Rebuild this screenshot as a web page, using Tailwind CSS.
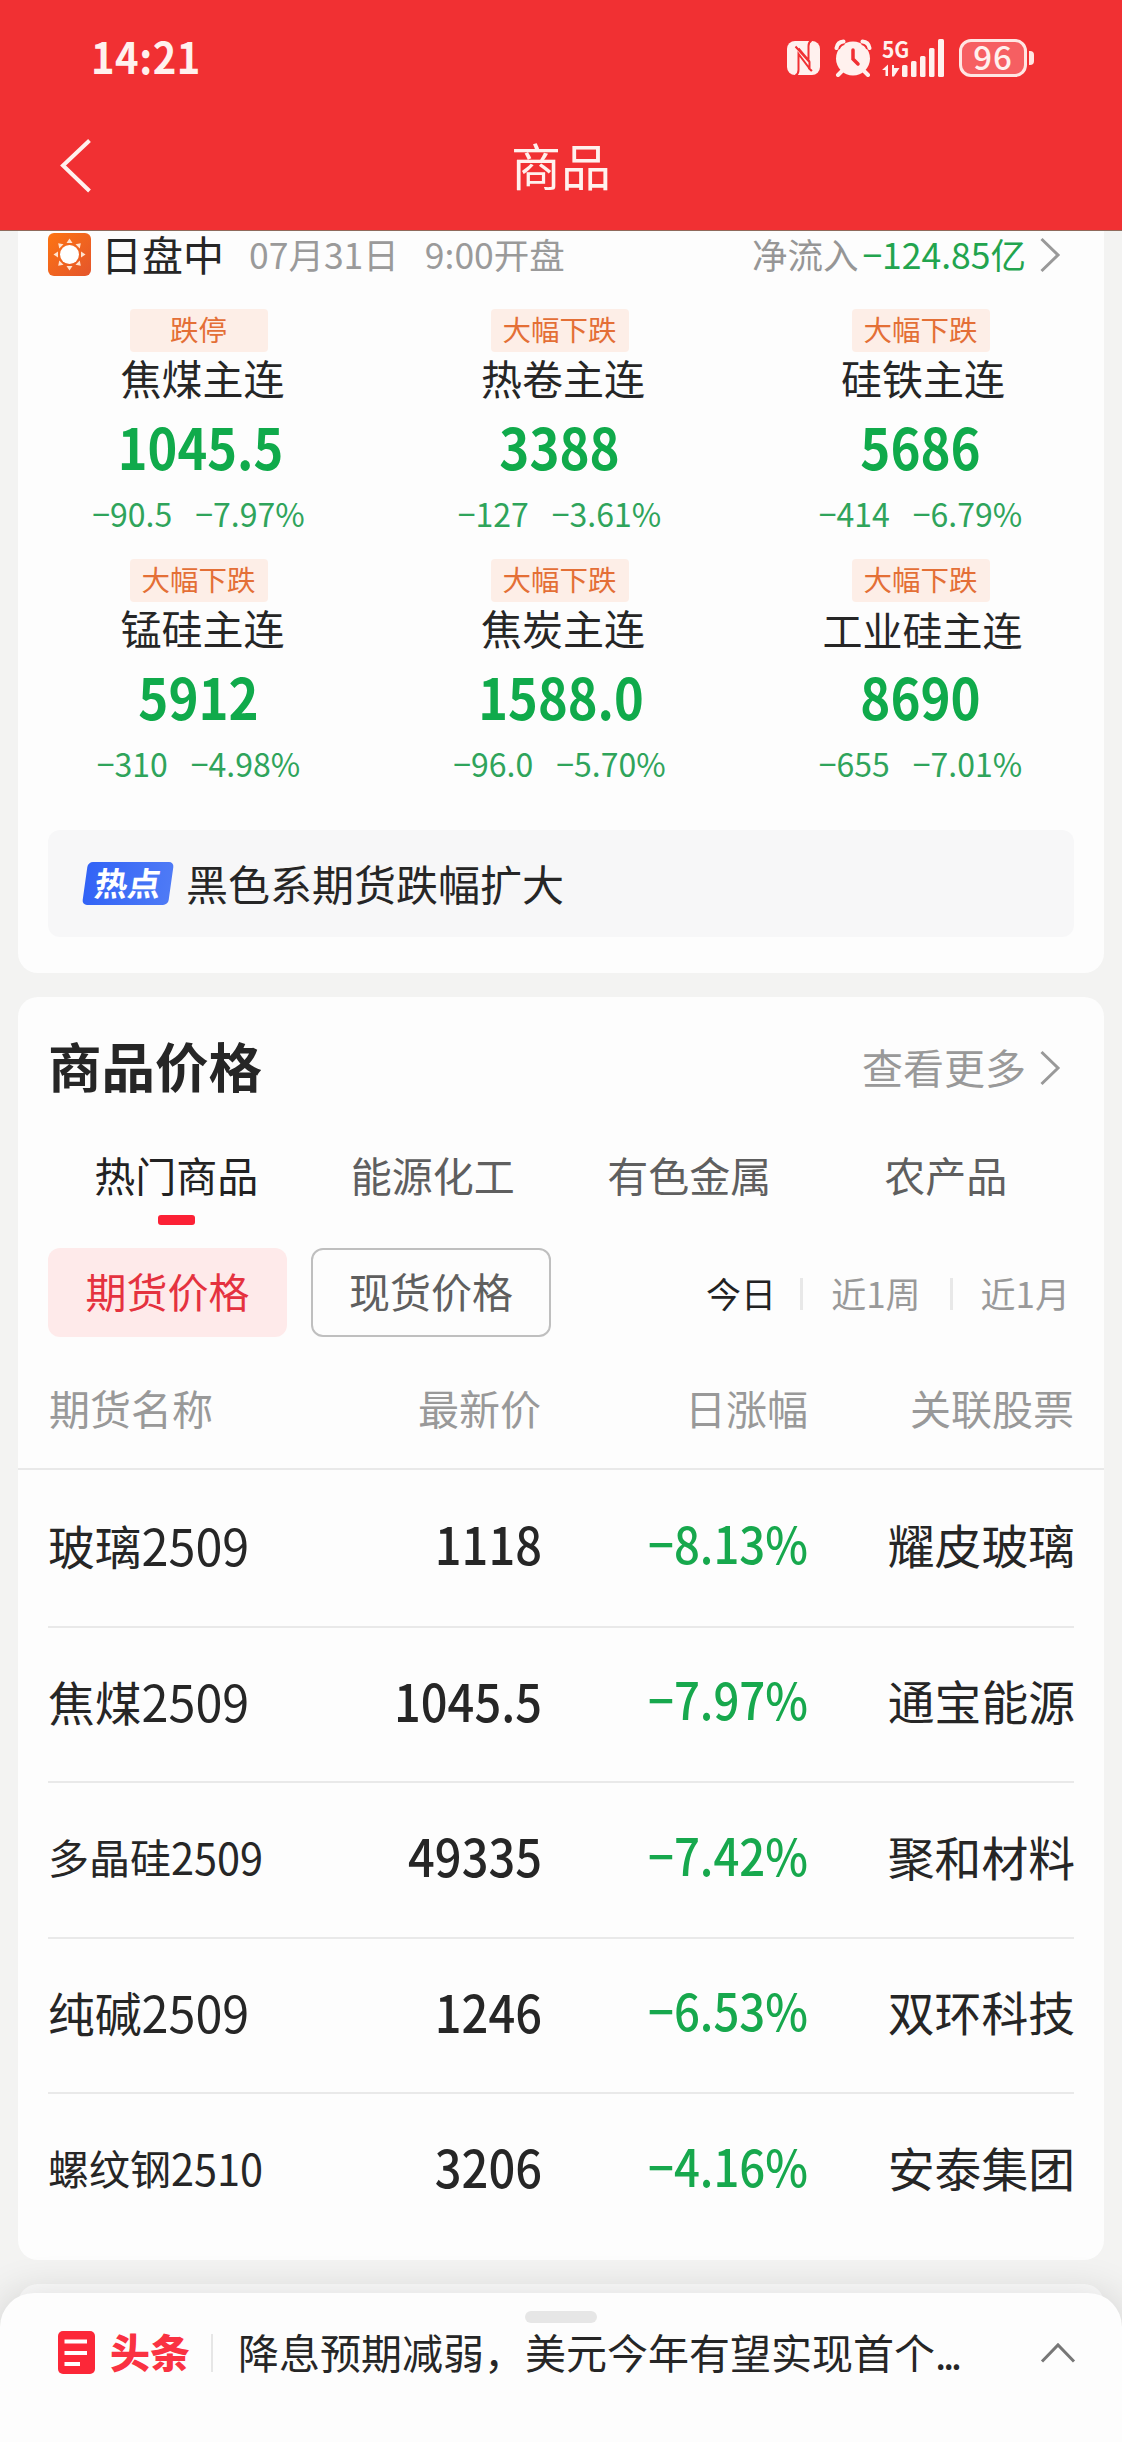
<!DOCTYPE html>
<html lang="zh-CN">
<head>
<meta charset="utf-8">
<meta name="viewport" content="width=device-width, initial-scale=1">
<title>商品</title>
<script src="https://cdn.jsdelivr.net/npm/@tailwindcss/browser@4"></script>
</head>
<body class="bg-[#f3f3f2]">
<div class="relative h-[2442px] w-[1122px] overflow-hidden bg-[#f3f3f2] font-['Noto_Sans_CJK_SC',sans-serif] leading-none whitespace-nowrap text-[#262626]">

  <!-- Header -->
  <header class="h-[231px] border-b border-[#8f6a5c] bg-[#f13033] text-[#fff1ee]">
    <div class="flex h-[116px] items-center pr-[88px] pl-[91px]">
      <div class="mb-[4px] scale-y-108 text-[40px] font-bold tracking-[0.500px]">14:21</div>
      <div class="ml-auto flex items-center">
        <!-- NFC -->
        <svg class="h-[36px] w-[36px]" viewBox="0 0 36 36">
          <rect x="1" y="1" width="33" height="34" rx="8" fill="#fff1ee"/>
          <path d="M9.500 35.500Q12.500 34 12.500 30V14L23.500 28.500V22L9.500 6.500M25.500 0.500Q22.500 2 22.500 6V19.500M12.500 8.500L23.500 21.500M22.500 28L26 31" fill="none" stroke="#f13033" stroke-width="2"/>
        </svg>
        <!-- Alarm -->
        <svg class="ml-[12px] h-[38px] w-[38px]" viewBox="0 0 38 38">
          <circle cx="19" cy="19.500" r="17" fill="#fff1ee"/>
          <path d="M2.500 9.500Q4 3.500 10 2.500M35.500 9.500Q34 3.500 28 2.500" fill="none" stroke="#f13033" stroke-width="7"/>
          <path d="M2.500 9Q3.500 3 9.500 2.500M35.500 9Q34.500 3 28.500 2.500M8 32L4 36M30 32L34 36" fill="none" stroke="#fff1ee" stroke-width="4" stroke-linecap="round"/>
          <path d="M19 11V20L24 25" fill="none" stroke="#f13033" stroke-width="3.500" stroke-linecap="round"/>
        </svg>
        <!-- Signal -->
        <div class="ml-[10px] grid h-[38px] w-[63px]">
          <span class="col-start-1 row-start-1 -mt-[2px] origin-left scale-x-95 text-[22px] leading-[22px] font-bold">5G</span>
          <svg class="col-start-1 row-start-1 h-[38px] w-[63px]" viewBox="0 0 63 38" fill="#fff1ee">
            <path d="M0 31L6 25.500V37H3.500V31zM10 26H12V29H17.500L12 37.500H10z"/>
            <rect x="20" y="26" width="5.500" height="12" rx="1.500"/>
            <rect x="29" y="22" width="5.500" height="16" rx="1.500"/>
            <rect x="38" y="17" width="5.500" height="21" rx="1.500"/>
            <rect x="47" y="9" width="5.500" height="29" rx="1.500"/>
            <rect x="56" y="0" width="6" height="38" rx="1.500"/>
          </svg>
        </div>
        <!-- Battery -->
        <div class="ml-[14px] flex h-[38px] w-[68px] items-center justify-center rounded-[12px] border-[3px] border-[#ffe6e3] bg-[#f65f62] text-[33px] font-medium tracking-[1px]"><span class="mb-1">96</span></div>
        <div class="ml-[2px] h-[14px] w-[5px] rounded-r-[4px] bg-[#ffe6e3]"></div>
      </div>
    </div>
    <div class="relative flex h-[97px] items-center justify-center">
      <svg class="absolute top-[22px] left-[58px] h-[56px] w-[34px]" viewBox="0 0 34 56" fill="none" stroke="#fff1ee" stroke-width="4"><path d="M31.500 2.500L5 27.500L31.500 53"/></svg>
      <h1 class="mb-[2px] text-[50px]">商品</h1>
    </div>
  </header>

  <!-- Session overview -->
  <section class="mx-[18px] h-[742px] rounded-b-[20px] bg-[#fdfdfd]">
    <div class="flex h-[45px] items-center pl-[30px]">
      <svg class="mt-[2px] h-[43px] w-[43px]" viewBox="0 0 43 43">
        <defs><linearGradient id="sun" x1="0" y1="0" x2="1" y2="1"><stop offset="0" stop-color="#fd7412"/><stop offset="1" stop-color="#e4552c"/></linearGradient></defs>
        <rect width="43" height="43" rx="6" fill="url(#sun)"/>
        <circle cx="21.500" cy="21.500" r="9.500" fill="#fff"/>
        <g fill="#ffe3d0">
          <path id="ray" d="M18.500 10L21.500 5.500L24.500 10z"/>
          <use href="#ray" transform="rotate(45 21.500 21.500)"/><use href="#ray" transform="rotate(90 21.500 21.500)"/><use href="#ray" transform="rotate(135 21.500 21.500)"/><use href="#ray" transform="rotate(180 21.500 21.500)"/><use href="#ray" transform="rotate(225 21.500 21.500)"/><use href="#ray" transform="rotate(270 21.500 21.500)"/><use href="#ray" transform="rotate(315 21.500 21.500)"/>
        </g>
      </svg>
      <span class="ml-[10px] text-[41px]">日盘中</span>
      <span class="ml-[25px] text-[35.500px] text-[#9a9a9a]">07月31日</span>
      <span class="ml-[26px] text-[35.500px] text-[#9a9a9a]">9:00开盘</span>
      <span class="ml-auto text-[35.500px] text-[#969696]">净流入</span>
      <span class="ml-[4px] text-[35.500px] text-[#22a44e]">−124.85亿</span>
      <svg class="mt-[2px] mr-[43px] ml-[13px] h-[36px] w-[22px]" viewBox="0 0 22 36" fill="none" stroke="#999" stroke-width="3"><path d="M2.500 2L19 18L2.500 34"/></svg>
    </div>

    <div class="mt-[33px] grid w-[1083px] grid-cols-[361px_361px_361px] text-center">
      <div class="flex h-[250px] flex-col items-center">
        <span class="flex h-[43px] w-[138px] items-center justify-center rounded-[4px] bg-[#fdeee7] pb-[2px] text-[28.500px] text-[#e46f36]">跌停</span>
        <span class="flex h-[51px] items-center pl-[8px] text-[41px]">焦煤主连</span>
        <span class="flex h-[84px] scale-y-112 items-center pl-[4px] text-[50.500px] font-bold text-[#10aa4b]">1045.5</span>
        <span class="flex h-[50px] items-center gap-[23px] text-[32px] text-[#2fa45b]"><span class="scale-y-104">−90.5</span><span class="scale-y-104">−7.97%</span></span>
      </div>
      <div class="flex h-[250px] flex-col items-center">
        <span class="flex h-[43px] w-[138px] items-center justify-center rounded-[4px] bg-[#fdeee7] pb-[2px] text-[28.500px] text-[#e46f36]">大幅下跌</span>
        <span class="flex h-[51px] items-center pl-[7px] text-[41px]">热卷主连</span>
        <span class="flex h-[84px] scale-y-112 items-center text-[51px] font-bold text-[#10aa4b]">3388</span>
        <span class="flex h-[50px] items-center gap-[23px] text-[32px] text-[#2fa45b]"><span class="scale-y-104">−127</span><span class="scale-y-104">−3.61%</span></span>
      </div>
      <div class="flex h-[250px] flex-col items-center">
        <span class="flex h-[43px] w-[138px] items-center justify-center rounded-[4px] bg-[#fdeee7] pb-[2px] text-[28.500px] text-[#e46f36]">大幅下跌</span>
        <span class="flex h-[51px] items-center pl-[5px] text-[41px]">硅铁主连</span>
        <span class="flex h-[84px] scale-y-112 items-center text-[51px] font-bold text-[#10aa4b]">5686</span>
        <span class="flex h-[50px] items-center gap-[23px] text-[32px] text-[#2fa45b]"><span class="scale-y-104">−414</span><span class="scale-y-104">−6.79%</span></span>
      </div>
      <div class="flex h-[250px] flex-col items-center">
        <span class="flex h-[43px] w-[138px] items-center justify-center rounded-[4px] bg-[#fdeee7] pb-[2px] text-[28.500px] text-[#e46f36]">大幅下跌</span>
        <span class="flex h-[51px] items-center pl-[8px] text-[41px]">锰硅主连</span>
        <span class="flex h-[84px] scale-y-112 items-center text-[51px] font-bold text-[#10aa4b]">5912</span>
        <span class="flex h-[50px] items-center gap-[23px] text-[32px] text-[#2fa45b]"><span class="scale-y-104">−310</span><span class="scale-y-104">−4.98%</span></span>
      </div>
      <div class="flex h-[250px] flex-col items-center">
        <span class="flex h-[43px] w-[138px] items-center justify-center rounded-[4px] bg-[#fdeee7] pb-[2px] text-[28.500px] text-[#e46f36]">大幅下跌</span>
        <span class="flex h-[51px] items-center pl-[7px] text-[41px]">焦炭主连</span>
        <span class="flex h-[84px] scale-y-112 items-center pl-[3px] text-[50.500px] font-bold text-[#10aa4b]">1588.0</span>
        <span class="flex h-[50px] items-center gap-[23px] text-[32px] text-[#2fa45b]"><span class="scale-y-104">−96.0</span><span class="scale-y-104">−5.70%</span></span>
      </div>
      <div class="flex h-[250px] flex-col items-center">
        <span class="flex h-[43px] w-[138px] items-center justify-center rounded-[4px] bg-[#fdeee7] pb-[2px] text-[28.500px] text-[#e46f36]">大幅下跌</span>
        <span class="flex h-[51px] items-center pt-[2px] pl-[4px] text-[40px]">工业硅主连</span>
        <span class="flex h-[84px] scale-y-112 items-center text-[51px] font-bold text-[#10aa4b]">8690</span>
        <span class="flex h-[50px] items-center gap-[23px] text-[32px] text-[#2fa45b]"><span class="scale-y-104">−655</span><span class="scale-y-104">−7.01%</span></span>
      </div>
    </div>

    <div class="mx-[30px] mt-[21px] flex h-[107px] items-center rounded-[12px] bg-[#f7f7f8] pl-[37px]">
      <span class="flex h-[43px] w-[86px] -skew-x-8 items-center justify-center rounded-[5px] bg-linear-to-r from-[#3263f6] to-[#4e7af6] pb-[3px] text-[33px] font-bold text-white">热点</span>
      <span class="ml-[15px] pb-[1px] text-[42px]">黑色系期货跌幅扩大</span>
    </div>
  </section>

  <!-- Commodity prices -->
  <section class="mx-[18px] mt-[24px] h-[1263px] rounded-[20px] bg-[#fdfdfd]">
    <div class="flex h-[136px] items-center pl-[30px]">
      <h2 class="text-[53.500px] font-bold">商品价格</h2>
      <span class="ml-auto pt-[3px] text-[41px] text-[#999]">查看更多</span>
      <svg class="mt-[6px] mr-[43px] ml-[13px] h-[36px] w-[22px]" viewBox="0 0 22 36" fill="none" stroke="#999" stroke-width="3"><path d="M2.500 2L19 18L2.500 34"/></svg>
    </div>

    <nav class="mx-[30px] grid grid-cols-4 text-[41px] text-[#5f5f5f]">
      <div class="flex flex-col items-center text-[#222]"><span class="flex h-[82px] items-center">热门商品</span><span class="h-[10px] w-[37px] rounded-[3px] bg-[#fc2135]"></span></div>
      <div class="flex flex-col items-center"><span class="flex h-[82px] items-center">能源化工</span></div>
      <div class="flex flex-col items-center"><span class="flex h-[82px] items-center">有色金属</span></div>
      <div class="flex flex-col items-center"><span class="flex h-[82px] items-center">农产品</span></div>
    </nav>

    <div class="mt-[23px] flex h-[89px] items-center pl-[30px]">
      <button class="flex h-[89px] w-[239px] items-center justify-center rounded-[12px] bg-[#feeaea] pb-[4px] text-[41px] text-[#e5323f]">期货价格</button>
      <button class="ml-[24px] flex h-[89px] w-[240px] items-center justify-center rounded-[12px] border-2 border-[#bfbfbf] pb-[4px] text-[41px] text-[#5f5f5f]">现货价格</button>
      <div class="mr-[34px] ml-auto flex items-center text-[35px] text-[#999]">
        <span class="text-[#222]">今日</span>
        <span class="mt-[3px] ml-[24px] h-[32px] w-[3px] bg-[#e8e8e8]"></span>
        <span class="ml-[28px]">近1周</span>
        <span class="mt-[3px] ml-[29px] h-[32px] w-[3px] bg-[#e8e8e8]"></span>
        <span class="ml-[28px]">近1月</span>
      </div>
    </div>

    <div class="grid h-[133px] grid-cols-[250px_243px_267px_267px] items-center border-b-2 border-[#e9e9e9] pt-[9px] pl-[30px] text-right text-[41px] text-[#999]">
      <span class="pl-[1px] text-left">期货名称</span><span>最新价</span><span>日涨幅</span><span class="pr-[1px]">关联股票</span>
    </div>

    <div class="mx-[30px]">
      <div class="grid h-[158px] grid-cols-[250px_244px_266px_267px] items-center border-b-2 border-[#e9e9e9] pb-2 text-right text-[46.800px]">
        <span class="text-left">玻璃<span class="inline-block scale-y-104 text-[48.500px]">2509</span></span><span class="mb-[3px] scale-y-110 text-[47px] font-medium">1118</span><span class="mb-[3px] scale-y-112 text-[45.500px] font-medium text-[#17a84d]">−8.13%</span><span>耀皮玻璃</span>
      </div>
      <div class="grid h-[155px] grid-cols-[250px_244px_266px_267px] items-center border-b-2 border-[#e9e9e9] pb-2 text-right text-[46.800px]">
        <span class="text-left">焦煤<span class="inline-block scale-y-104 text-[48.500px]">2509</span></span><span class="mb-[3px] scale-y-110 text-[47px] font-medium">1045.5</span><span class="mb-[3px] scale-y-112 text-[45.500px] font-medium text-[#17a84d]">−7.97%</span><span>通宝能源</span>
      </div>
      <div class="grid h-[156px] grid-cols-[250px_244px_266px_267px] items-center border-b-2 border-[#e9e9e9] pb-2 text-right text-[46.800px]">
        <span class="pt-[2px] text-left text-[41px]">多晶硅<span class="inline-block scale-y-105 text-[41.500px]">2509</span></span><span class="mb-[3px] scale-y-110 text-[47px] font-medium">49335</span><span class="mb-[3px] scale-y-112 text-[45.500px] font-medium text-[#17a84d]">−7.42%</span><span>聚和材料</span>
      </div>
      <div class="grid h-[155px] grid-cols-[250px_244px_266px_267px] items-center border-b-2 border-[#e9e9e9] pb-2 text-right text-[46.800px]">
        <span class="text-left">纯碱<span class="inline-block scale-y-104 text-[48.500px]">2509</span></span><span class="mb-[3px] scale-y-110 text-[47px] font-medium">1246</span><span class="mb-[3px] scale-y-112 text-[45.500px] font-medium text-[#17a84d]">−6.53%</span><span>双环科技</span>
      </div>
      <div class="grid h-[154px] grid-cols-[250px_244px_266px_267px] items-center pb-2 text-right text-[46.800px]">
        <span class="pt-[2px] text-left text-[41px]">螺纹钢<span class="inline-block scale-y-105 text-[41.500px]">2510</span></span><span class="mb-[3px] scale-y-110 text-[47px] font-medium">3206</span><span class="mb-[3px] scale-y-112 text-[45.500px] font-medium text-[#17a84d]">−4.16%</span><span>安泰集团</span>
      </div>
    </div>
  </section>

  <!-- Next card, mostly covered by the news sheet -->
  <section class="mx-[18px] mt-[24px] h-[158px] rounded-t-[20px] bg-[#fdfdfd]"></section>

  <!-- News sheet -->
  <footer class="absolute inset-x-0 bottom-0 h-[149px] rounded-t-[34px] bg-[#fdfdfd] shadow-[0_0_40px_rgba(0,0,0,0.14)]">
    <div class="mx-auto mt-[18px] h-[12px] w-[72px] rounded-full bg-[#e6e6e6]"></div>
    <div class="mt-[5px] flex h-[46px] items-center pl-[58px]">
      <svg class="mt-[3px] h-[43px] w-[37px]" viewBox="0 0 37 43"><rect width="37" height="43" rx="5" fill="#fc2738"/><path d="M6.500 10.500H29M6.500 22H29M6.500 33H22" stroke="#fff" stroke-width="4"/></svg>
      <span class="ml-[15px] text-[40px] font-black text-[#fa3242]">头条</span>
      <span class="mt-[4px] ml-[21px] h-[38px] w-[2px] bg-[#e6e6e6]"></span>
      <span class="ml-[25px] text-[41px]">降息预期减弱，美元今年有望实现首个<span class="tracking-[-3.500px]">...</span></span>
      <svg class="mt-[3px] mr-[46px] ml-auto h-[22px] w-[36px]" viewBox="0 0 36 22" fill="none" stroke="#777" stroke-width="3"><path d="M2 19.500L18 3L34 19.500"/></svg>
    </div>
  </footer>
</div>
</body>
</html>
